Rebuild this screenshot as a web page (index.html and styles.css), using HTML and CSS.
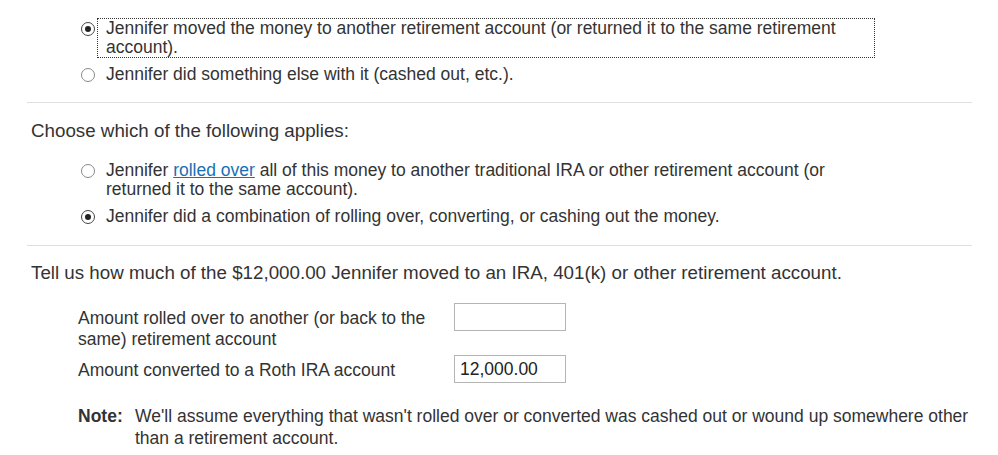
FILE: index.html
```html
<!DOCTYPE html>
<html>
<head>
<meta charset="utf-8">
<link rel="stylesheet" href="styles.css">
</head>
<body>
<div class="page">
  <div class="section first">
    <ul class="options">
      <li class="option">
        <span class="radio checked"></span>
        <span class="label focused">Jennifer moved the money to another retirement account (or returned it to the same retirement account).</span>
      </li>
      <li class="option">
        <span class="radio"></span>
        <span class="label">Jennifer did something else with it (cashed out, etc.).</span>
      </li>
    </ul>
  </div>
  <div class="section">
    <h2 class="question">Choose which of the following applies:</h2>
    <ul class="options">
      <li class="option">
        <span class="radio"></span>
        <span class="label">Jennifer <a class="link" href="#">rolled over</a> all of this money to another traditional IRA or other retirement account (or returned it to the same account).</span>
      </li>
      <li class="option">
        <span class="radio checked"></span>
        <span class="label">Jennifer did a combination of rolling over, converting, or cashing out the money.</span>
      </li>
    </ul>
  </div>
  <div class="section last">
    <h2 class="question">Tell us how much of the $12,000.00 Jennifer moved to an IRA, 401(k) or other retirement account.</h2>
    <div class="form">
      <div class="row">
        <div class="row-label">Amount rolled over to another (or back to the same) retirement account</div>
        <div class="field"></div>
      </div>
      <div class="row">
        <div class="row-label">Amount converted to a Roth IRA account</div>
        <div class="field">12,000.00</div>
      </div>
    </div>
    <div class="note">
      <span class="note-title">Note:</span>
      <span class="note-text">We'll assume everything that wasn't rolled over or converted was cashed out or wound up somewhere other than a retirement account.</span>
    </div>
  </div>
</div>
</body>
</html>
```

FILE: styles.css
```css
html, body {
  margin: 0;
  padding: 0;
  background: #ffffff;
}
body {
  font-family: "Liberation Sans", Arial, sans-serif;
  color: #333333;
  font-size: 17.5px;
}
.page {
  width: 945px;
  margin-left: 27px;
}
.section {
  border-bottom: 1px solid #e0e0e0;
  padding: 0 0 18px 0;
}
.section.first {
  padding-top: 18px;
  padding-bottom: 17px;
}
.section.last {
  border-bottom: none;
}
.question {
  margin: 0;
  padding: 17px 0 0 4px;
  font-size: 18.75px;
  font-weight: normal;
  line-height: 22px;
  color: #333333;
}
.section.last .question {
  padding-top: 16px;
}
.options {
  list-style: none;
  margin: 0;
  padding: 0 97px 0 54px;
}
.section .question + .options {
  margin-top: 18px;
}
.option {
  display: flex;
  align-items: flex-start;
  margin-bottom: 6px;
}
.option:last-child {
  margin-bottom: 0;
}
.radio {
  flex: none;
  box-sizing: border-box;
  width: 14px;
  height: 14px;
  margin-top: 4px;
  border: 1px solid #8a8a8a;
  border-radius: 50%;
  background: #ffffff;
  display: flex;
  align-items: center;
  justify-content: center;
}
.radio.checked {
  border-color: #444444;
}
.radio.checked::after {
  content: "";
  width: 6px;
  height: 6px;
  border-radius: 50%;
  background: #222222;
}
.label {
  flex: 1;
  line-height: 19px;
  padding: 0 8px;
  margin-left: 2px;
  border: 1px dotted transparent;
}
.label.focused {
  border-color: #333333;
}
.link {
  color: #1a6fb5;
  text-decoration: underline;
}
.form {
  padding: 24px 0 0 51px;
  display: flex;
  flex-direction: column;
  gap: 10px;
}
.row {
  display: flex;
  align-items: flex-start;
}
.row-label {
  width: 376px;
  line-height: 21px;
}
.field {
  box-sizing: border-box;
  width: 112px;
  height: 28px;
  margin-top: -5px;
  border: 1px solid #b5b5b5;
  padding: 3px 5px;
  line-height: 21px;
  color: #222222;
}
.note {
  display: flex;
  padding: 22px 0 0 51px;
  line-height: 22px;
}
.note-title {
  flex: none;
  width: 57px;
  font-weight: bold;
}
.note-text {
  max-width: 850px;
}
```
